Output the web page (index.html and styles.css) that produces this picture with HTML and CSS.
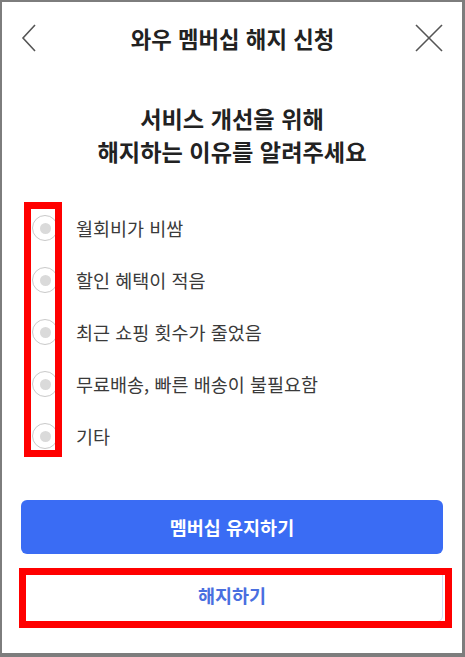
FILE: index.html
```html
<!DOCTYPE html>
<html lang="ko">
<head>
    <meta charset="UTF-8">
    <meta name="viewport" content="width=device-width, initial-scale=1.0">
    <title>와우 멤버십 해지 신청</title>
    <link rel="stylesheet" href="styles.css">
</head>
<body>
    <div class="screen">
        <header class="topbar">
            <button class="icon-btn back" aria-label="뒤로">
                <svg width="16" height="28" viewBox="0 0 16 28">
                    <polyline points="14,1 2,14 14,27" fill="none" stroke="#555" stroke-width="1.6"/>
                </svg>
            </button>
            <h1 class="title">와우 멤버십 해지 신청</h1>
            <button class="icon-btn close" aria-label="닫기">
                <svg width="28" height="28" viewBox="0 0 28 28">
                    <line x1="1" y1="1" x2="27" y2="27" stroke="#555" stroke-width="1.6"/>
                    <line x1="27" y1="1" x2="1" y2="27" stroke="#555" stroke-width="1.6"/>
                </svg>
            </button>
        </header>

        <main class="content">
            <h2 class="question">서비스 개선을 위해<br>해지하는 이유를 알려주세요</h2>

            <ul class="reasons">
                <li class="reason"><span class="radio"></span><span class="label">월회비가 비쌈</span></li>
                <li class="reason"><span class="radio"></span><span class="label">할인 혜택이 적음</span></li>
                <li class="reason"><span class="radio"></span><span class="label">최근 쇼핑 횟수가 줄었음</span></li>
                <li class="reason"><span class="radio"></span><span class="label">무료배송, 빠른 배송이 불필요함</span></li>
                <li class="reason"><span class="radio"></span><span class="label">기타</span></li>
                <!-- highlight around the radio column -->
                <span class="mark mark-radios"></span>
            </ul>

            <div class="actions">
                <button class="btn btn-keep">멤버십 유지하기</button>
                <div class="cancel-wrap">
                    <button class="btn btn-cancel">해지하기</button>
                    <span class="mark mark-cancel"></span>
                </div>
            </div>
        </main>
    </div>
</body>
</html>
```

FILE: styles.css
```css
* {
    box-sizing: border-box;
}
body {
    margin: 0;
    background: #fff;
    font-family: "Noto Sans CJK KR", "Noto Sans", sans-serif;
    color: #333;
}
.screen {
    width: 465px;
    height: 657px;
    border-style: solid;
    border-color: #7d7d7d;
    border-width: 2px 3px 4px 2px;
    background: #fff;
    overflow: hidden;
}
.topbar {
    height: 72px;
    display: flex;
    align-items: center;
    justify-content: space-between;
    padding: 0 18px 0 19px;
}
.icon-btn {
    background: none;
    border: none;
    padding: 0;
    width: 30px;
    height: 30px;
    display: flex;
    align-items: center;
    justify-content: center;
}
.back {
    justify-content: flex-start;
}
.title {
    margin: 0;
    font-size: 22.3px;
    font-weight: 700;
    color: #222;
}
.content {
    padding: 0 19px;
}
.question {
    margin: 28px 0 0;
    text-align: center;
    font-size: 23.2px;
    line-height: 33px;
    font-weight: 700;
    color: #222;
}
.reasons {
    position: relative;
    list-style: none;
    margin: 34px 0 0;
    padding: 0;
}
.reason {
    height: 52px;
    display: flex;
    align-items: center;
}
.radio {
    width: 26px;
    height: 26px;
    margin-left: 11px;
    margin-right: 18px;
    border: 1px solid #c9c9c9;
    border-radius: 50%;
    display: flex;
    align-items: center;
    justify-content: center;
    flex-shrink: 0;
}
.radio::after {
    content: "";
    width: 11px;
    height: 11px;
    border-radius: 50%;
    background: #dadada;
}
.label {
    font-size: 18.5px;
    color: #3a3a3a;
}
.mark {
    position: absolute;
    border: 7px solid #ff0000;
    pointer-events: none;
}
.mark-radios {
    left: 3px;
    top: 0;
    width: 38px;
    height: 255px;
}
.actions {
    margin-top: 38px;
    display: flex;
    flex-direction: column;
    gap: 14px;
}
.btn {
    width: 100%;
    height: 54px;
    border-radius: 6px;
    font-family: inherit;
    font-size: 18.5px;
    font-weight: 700;
}
.btn-keep {
    background: #3a6cf4;
    border: none;
    color: #fff;
}
.cancel-wrap {
    position: relative;
}
.btn-cancel {
    background: #fff;
    border: 1px solid #d5def5;
    color: #4a6fe0;
}
.mark-cancel {
    left: -2px;
    right: -9px;
    top: 0;
    bottom: -6px;
}
```
